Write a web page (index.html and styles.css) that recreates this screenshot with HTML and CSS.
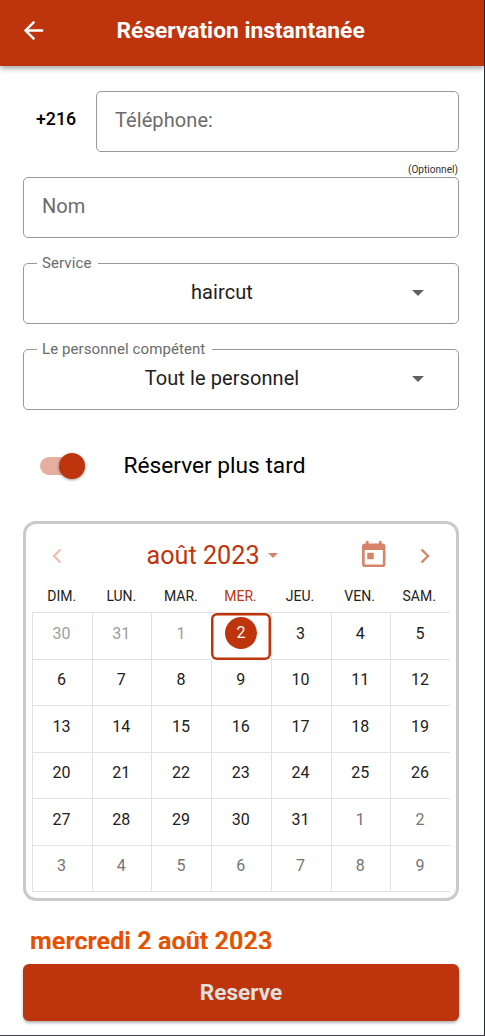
FILE: index.html
```html
<!DOCTYPE html>
<html lang="fr">
<head>
<meta charset="utf-8">
<title>Réservation instantanée</title>
<link rel="stylesheet" href="styles.css">
</head>
<body>
<div class="screen">
  <header class="app-bar">
    <svg class="back" viewBox="0 0 24 24"><path d="M20 11H7.83l5.59-5.59L12 4l-8 8 8 8 1.41-1.41L7.83 13H20z"/></svg>
    <h1 class="title">Réservation instantanée</h1>
  </header>
  <main class="form">
    <div class="phone-row">
      <span class="prefix">+216</span>
      <div class="field phone"><span class="hint">Téléphone:</span></div>
    </div>
    <div class="optional">(Optionnel)</div>
    <div class="field"><span class="hint">Nom</span></div>
    <fieldset class="select">
      <legend>Service</legend>
      <span class="value">haircut</span>
      <svg class="caret" viewBox="0 0 12 6"><path d="M0 0h12L6 6z"/></svg>
    </fieldset>
    <fieldset class="select">
      <legend>Le personnel compétent</legend>
      <span class="value">Tout le personnel</span>
      <svg class="caret" viewBox="0 0 12 6"><path d="M0 0h12L6 6z"/></svg>
    </fieldset>
    <div class="switch-row">
      <span class="switch"><span class="thumb"></span></span>
      <span class="switch-label">Réserver plus tard</span>
    </div>
    <section class="calendar">
      <div class="cal-head">
        <svg class="chev prev" viewBox="0 0 10 16"><path d="M8.5 1.5 2 8l6.5 6.5"/></svg>
        <span class="month">août 2023</span>
        <svg class="month-caret" viewBox="0 0 10 5"><path d="M0 0h10L5 5z"/></svg>
        <svg class="today-icon" viewBox="3 1 18 20"><path d="M19 3h-1V1h-2v2H8V1H6v2H5c-1.11 0-2 .9-2 2v14c0 1.1.89 2 2 2h14c1.1 0 2-.9 2-2V5c0-1.1-.9-2-2-2zm0 16H5V8h14v11zM7 10h5v5H7z"/></svg>
        <svg class="chev next" viewBox="0 0 10 16"><path d="M1.5 1.5 8 8l-6.5 6.5"/></svg>
      </div>
      <div class="weekdays"><span>DIM.</span><span>LUN.</span><span>MAR.</span><span class="current">MER.</span><span>JEU.</span><span>VEN.</span><span>SAM.</span></div>
      <div class="days">
        <span class="past">30</span><span class="past">31</span><span class="past">1</span><span class="selected"><b>2</b></span><span>3</span><span>4</span><span>5</span>
        <span>6</span><span>7</span><span>8</span><span>9</span><span>10</span><span>11</span><span>12</span>
        <span>13</span><span>14</span><span>15</span><span>16</span><span>17</span><span>18</span><span>19</span>
        <span>20</span><span>21</span><span>22</span><span>23</span><span>24</span><span>25</span><span>26</span>
        <span>27</span><span>28</span><span>29</span><span>30</span><span>31</span><span class="other">1</span><span class="other">2</span>
        <span class="other">3</span><span class="other">4</span><span class="other">5</span><span class="other">6</span><span class="other">7</span><span class="other">8</span><span class="other">9</span>
      </div>
    </section>
    <div class="date">mercredi 2 août 2023</div>
    <button class="reserve">Reserve</button>
  </main>
</div>
</body>
</html>
```
FILE: styles.css
```css
* { box-sizing: border-box; }
body { margin: 0; font-family: Roboto, "Liberation Sans", sans-serif; background: #fff; }
.screen {
  width: 485px; height: 1036px; overflow: hidden;
  border-right: 1px solid #24262b; border-bottom: 1px solid #41434f;
}
.app-bar {
  height: 65.5px; display: flex; align-items: center; padding: 0 0 4px 19px;
  background: #be340c; box-shadow: 0 2px 6px rgba(0,0,0,.4);
}
.back { width: 29px; height: 29px; fill: #fff; }
.title { margin: 0 0 0 68.5px; font-size: 22.8px; line-height: 28px; font-weight: 700; color: #fff; white-space: nowrap; letter-spacing: -.02px; }
.form { display: flex; flex-direction: column; padding: 25.5px 25px 0 23px; }
.phone-row { display: flex; align-items: center; height: 61px; }
.prefix { width: 73px; padding: 0 0 6px 13px; font-size: 17.8px; font-weight: 500; color: #000; }
.field { height: 61px; display: flex; align-items: center; padding: 0 18px 3px; border: 1px solid #999; border-radius: 5px; }
.phone { flex: 1; }
.hint { font-size: 20px; color: #6b6b6b; letter-spacing: .08px; }
.optional { height: 25px; padding: 12px 1px 0 0; text-align: right; font-size: 10.1px; line-height: 12px; color: #333; }
.select {
  height: 70px; margin: 16px 0 0; padding: 0 34px 0 12px; min-width: 0;
  display: flex; border: 1px solid #999; border-radius: 5px;
}
.select legend { margin-left: 1px; padding: 0 7px 0 5px; height: 18px; font-size: 15px; line-height: 18px; color: #6b6b6b; letter-spacing: .09px; }
.value { flex: 1; padding: 8px 4px 0 0; text-align: center; font-size: 20px; line-height: 24px; color: #212121; letter-spacing: .08px; }
.caret { width: 12px; height: 6px; margin-top: 18px; fill: #616161; }
.switch-row { display: flex; align-items: center; height: 36px; margin-top: 37.5px; padding-left: 17px; }
.switch { display: flex; align-items: center; justify-content: flex-end; width: 45px; height: 18px; border-radius: 9px; background: #e5ae9e; }
.thumb { flex: none; width: 26px; height: 26px; border-radius: 50%; background: #be340c; box-shadow: 0 1px 3px rgba(0,0,0,.4); }
.switch-label { margin-left: 38.5px; font-size: 22.7px; color: #000; }
.calendar { height: 380px; margin-top: 37.5px; padding: 0 6px; border: 3px solid #cacaca; border-radius: 13px; }
.cal-head { height: 62.5px; display: flex; align-items: center; padding: 1px 0 0 20px; color: #be340c; }
.chev { width: 10px; height: 16px; fill: none; stroke: #d9826a; stroke-width: 2.3; }
.prev { stroke: #edbfb1; }
.month { width: 115px; margin-left: 84.5px; font-size: 25.2px; white-space: nowrap; }
.month-caret { width: 10px; height: 5px; margin-left: 6px; fill: #d9826a; }
.today-icon { width: 23.5px; height: 26px; margin: 0 0 3px 84.5px; fill: #d9826a; }
.next { margin-left: 34px; }
.weekdays { display: grid; grid-template-columns: repeat(7, 1fr); height: 25.5px; padding-right: 1px; font-size: 14px; line-height: 19px; text-align: center; color: #212121; }
.current { color: #be340c; }
.days {
  display: grid; grid-template-columns: repeat(7, 1fr); grid-auto-rows: 46.55px;
  border-top: 1px solid #e2e2e2; font-size: 16px; text-align: center; color: #212121;
}
.days > span { padding: 9.5px 1.5px 0 0; line-height: 21px; border-left: 1px solid #e2e2e2; border-bottom: 1px solid #e2e2e2; }
.days .past { color: #9e9e9e; }
.days .other { color: #757575; }
.days .selected { padding: 4px 0 0; border: 0; border-radius: 6px; box-shadow: inset 0 0 0 2.5px #be340c; }
.selected b { display: block; width: 32px; height: 32px; margin: 0 auto; border-radius: 50%; background: #be340c; color: #fff; font-weight: 400; line-height: 32px; }
.date { height: 21.5px; margin: 26.5px 0 0 7px; overflow: hidden; font-size: 25.2px; line-height: 27px; font-weight: 700; color: #e65100; white-space: nowrap; }
.reserve {
  height: 57px; margin-top: 15px; padding: 0 0 1px; border: 0; border-radius: 6px;
  background: #be340c; color: #e0e0e0; font: 700 22.6px Roboto, sans-serif; box-shadow: 0 2px 3px rgba(0,0,0,.3);
}
```
